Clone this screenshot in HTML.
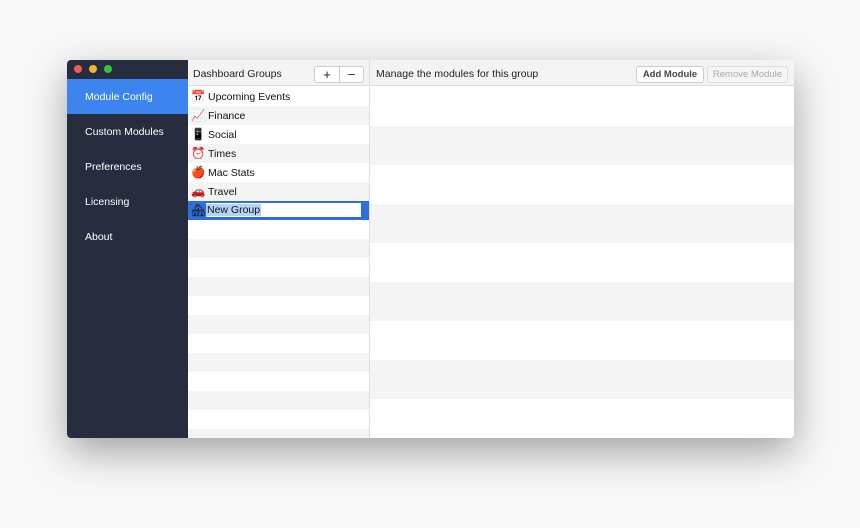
<!DOCTYPE html><html><head><style>
body{margin:0;width:860px;height:528px;background:#f8f8f8;font-family:"Liberation Sans",sans-serif;position:relative;overflow:hidden}
.win{position:absolute;left:67px;top:60px;width:727px;height:378px;background:#fff;box-shadow:0 14px 40px rgba(0,0,0,.35);border-radius:4px;overflow:hidden}
.side{position:absolute;left:0;top:0;width:121px;height:378px;background:#272d3f}
.dot{position:absolute;top:5px;width:8px;height:8px;border-radius:50%}
.si{position:absolute;left:0;width:121px;height:35px;line-height:37px;color:#fff;font-size:10.5px;padding-left:18px;box-sizing:border-box}
.hdr{position:absolute;top:0;height:26px;background:#f3f3f3;border-bottom:1px solid #ddd;font-size:10.5px;line-height:29px;color:#222}
.row{position:absolute;left:121px;width:181px;height:19px;font-size:10.5px;line-height:20px;color:#111}
.rr{position:absolute;left:303px;width:424px;height:39px}
.btn{position:absolute;top:6px;height:15px;border:1px solid #ccc;border-radius:3px;background:#fff;font-size:9.5px;line-height:15px;text-align:center}
.e{display:inline-block;width:14px;margin:0 3px 0 3px;font-size:11.5px}
</style></head><body>
<div class="win">
<div class="side">
<div class="dot" style="left:7px;background:#ee5b55"></div><div class="dot" style="left:22px;background:#f2b72f"></div><div class="dot" style="left:37px;background:#37c243"></div>
<div class="si" style="top:19px;background:#3c84ee">Module Config</div>
<div class="si" style="top:54px">Custom Modules</div>
<div class="si" style="top:89px">Preferences</div>
<div class="si" style="top:124px">Licensing</div>
<div class="si" style="top:159px">About</div>
</div>
<div class="hdr" style="left:121px;width:182px;padding-left:5px;box-sizing:border-box;border-right:1px solid #ddd">Dashboard Groups
<div class="btn" style="left:126px;width:24px;border-radius:3px 0 0 3px;font-size:13px">+</div><div class="btn" style="left:151px;width:23px;border-radius:0 3px 3px 0;font-size:13px">−</div></div>
<div class="hdr" style="left:303px;width:424px;padding-left:6px;box-sizing:border-box">Manage the modules for this group
<div class="btn" style="left:266px;width:66px;color:#444;font-weight:bold">Add Module</div>
<div class="btn" style="left:337px;width:79px;color:#aaa;border-color:#ddd;background:#f5f5f5">Remove Module</div></div>
<div class="row" style="top:27px"><span class="e">📅</span>Upcoming Events</div>
<div class="row" style="top:46px;background:#f4f4f4"><span class="e">📈</span>Finance</div>
<div class="row" style="top:65px"><span class="e">📱</span>Social</div>
<div class="row" style="top:84px;background:#f4f4f4"><span class="e">⏰</span>Times</div>
<div class="row" style="top:103px"><span class="e">🍎</span>Mac Stats</div>
<div class="row" style="top:122px;background:#f4f4f4"><span class="e">🚗</span>Travel</div>
<div class="row" style="top:141px;background:#2d6fd6;width:182px"><span class="e">🏘</span><span style="position:absolute;left:18px;top:2px;width:155px;height:14px;background:#fff;line-height:15px"><span style="background:#b4d3fb;padding:0 1px">New Group</span></span></div>
<div class="row" style="top:179px;background:#f4f4f4"></div>
<div class="row" style="top:217px;background:#f4f4f4"></div>
<div class="row" style="top:255px;background:#f4f4f4"></div>
<div class="row" style="top:293px;background:#f4f4f4"></div>
<div class="row" style="top:331px;background:#f4f4f4"></div>
<div class="row" style="top:369px;background:#f4f4f4"></div>
<div class="rr" style="top:66px;background:#f4f4f4"></div>
<div class="rr" style="top:144px;background:#f4f4f4"></div>
<div class="rr" style="top:222px;background:#f4f4f4"></div>
<div class="rr" style="top:300px;background:#f4f4f4"></div>
<div style="position:absolute;left:302px;top:27px;width:1px;height:351px;background:#ddd"></div>
</div>
</body></html>
